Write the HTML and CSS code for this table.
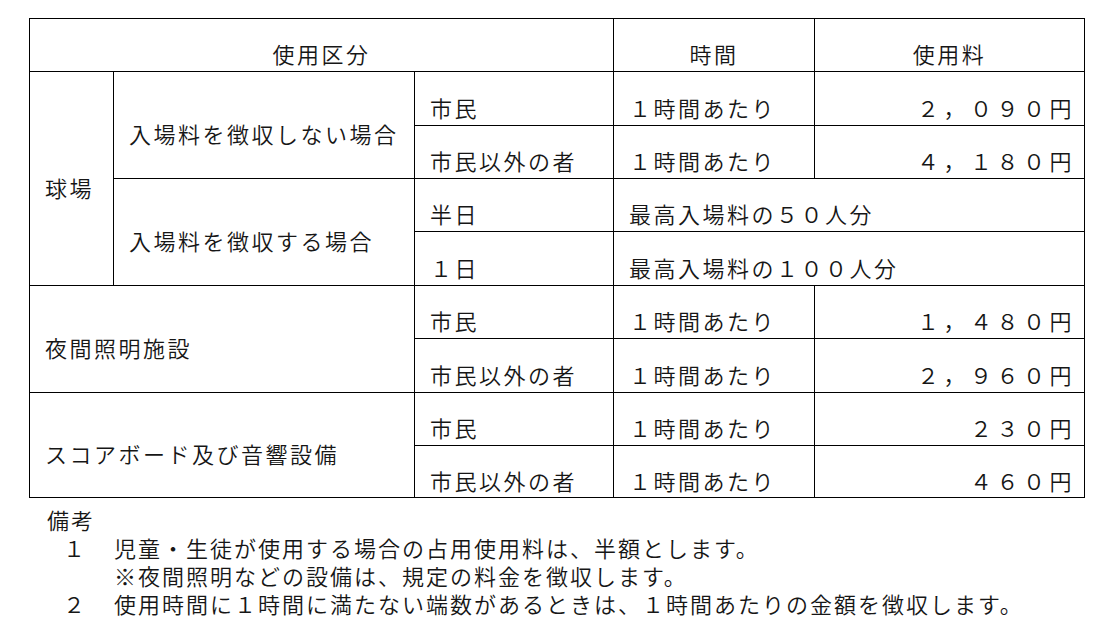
FILE: index.html
```html
<!DOCTYPE html>
<html lang="ja">
<head>
<meta charset="utf-8">
<title>使用料</title>
<link rel="stylesheet" href="styles.css">
</head>
<body>
<main class="page">
  <table class="fees">
    <colgroup>
      <col class="c1"><col class="c2"><col class="c3"><col class="c4"><col class="c5">
    </colgroup>
    <tr class="r-head">
      <th colspan="3">使用区分</th>
      <th>時間</th>
      <th>使用料</th>
    </tr>
    <tr class="r1">
      <td rowspan="4">球場</td>
      <td rowspan="2">入場料を徴収しない場合</td>
      <td>市民</td>
      <td>１時間あたり</td>
      <td class="fee">２，０９０円</td>
    </tr>
    <tr class="r2">
      <td>市民以外の者</td>
      <td>１時間あたり</td>
      <td class="fee">４，１８０円</td>
    </tr>
    <tr class="r3">
      <td rowspan="2">入場料を徴収する場合</td>
      <td>半日</td>
      <td colspan="2">最高入場料の５０人分</td>
    </tr>
    <tr class="r4">
      <td>１日</td>
      <td colspan="2">最高入場料の１００人分</td>
    </tr>
    <tr class="r5">
      <td colspan="2" rowspan="2">夜間照明施設</td>
      <td>市民</td>
      <td>１時間あたり</td>
      <td class="fee">１，４８０円</td>
    </tr>
    <tr class="r6">
      <td>市民以外の者</td>
      <td>１時間あたり</td>
      <td class="fee">２，９６０円</td>
    </tr>
    <tr class="r7">
      <td colspan="2" rowspan="2">スコアボード及び音響設備</td>
      <td>市民</td>
      <td>１時間あたり</td>
      <td class="fee">２３０円</td>
    </tr>
    <tr class="r8">
      <td>市民以外の者</td>
      <td>１時間あたり</td>
      <td class="fee">４６０円</td>
    </tr>
  </table>

  <section class="notes">
    <p class="notes-title">備考</p>
    <div class="note">
      <span class="num">１</span>
      <div class="body">
        <p>児童・生徒が使用する場合の占用使用料は、半額とします。</p>
        <p>※夜間照明などの設備は、規定の料金を徴収します。</p>
      </div>
    </div>
    <div class="note">
      <span class="num">２</span>
      <div class="body">
        <p>使用時間に１時間に満たない端数があるときは、１時間あたりの金額を徴収します。</p>
      </div>
    </div>
  </section>
</main>
</body>
</html>
```

FILE: styles.css
```css
html, body {
  margin: 0;
  padding: 0;
  background: #ffffff;
}

body {
  font-family: "Noto Sans CJK JP", "Noto Sans", sans-serif;
  font-weight: 350;
  color: #161616;
}

.page {
  padding: 18px 0 0 29px;
}

.fees {
  border-collapse: collapse;
  table-layout: fixed;
  width: 1055px;
  font-size: 22px;
  letter-spacing: 2.5px;
}

.c1 { width: 84px; }
.c2 { width: 301px; }
.c3 { width: 199px; }
.c4 { width: 201px; }
.c5 { width: 270px; }

.fees th,
.fees td {
  border: 1px solid #000;
  padding: 16px 10px 0 15px;
  vertical-align: middle;
  line-height: 26px;
  font-weight: 350;
  white-space: nowrap;
}

.fees th {
  text-align: center;
  padding-left: 0;
  padding-right: 0;
}

.fees .fee {
  text-align: right;
  padding-right: 8px;
  letter-spacing: 4.5px;
}

.r-head { height: 53px; }
.r1 { height: 54px; }
.r2 { height: 53px; }
.r3 { height: 53px; }
.r4 { height: 54px; }
.r5 { height: 53px; }
.r6 { height: 54px; }
.r7 { height: 53px; }
.r8 { height: 52px; }

.notes {
  margin-top: 7px;
  font-size: 22px;
  letter-spacing: 2px;
  line-height: 28px;
}

.notes p {
  margin: 0;
}

.notes-title {
  padding-left: 18px;
}

.note {
  display: grid;
  grid-template-columns: 51px 1fr;
  padding-left: 34px;
}
```
